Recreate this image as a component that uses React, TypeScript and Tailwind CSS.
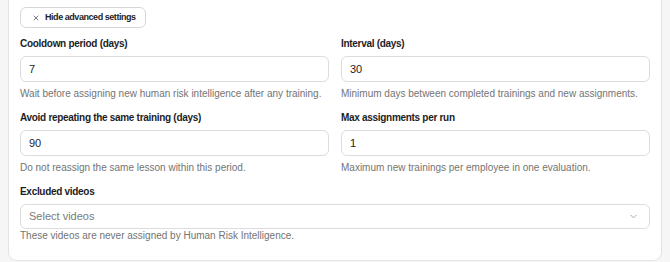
import { X, ChevronDown } from "lucide-react";

function Field({ label, value, help }: { label: string; value: string; help: string }) {
  return (
    <div className="flex flex-col">
      <label className="text-[10px] font-bold tracking-[-0.3px] text-[#1d1d1f] leading-[14px] mb-[5px]">{label}</label>
      <div className="h-[26px] rounded-[6px] border border-[#dcdcdc] bg-white px-[8px] flex items-center text-[11px] text-[#1d1d1f]">
        {value}
      </div>
      <p className="mt-[5px] text-[10px] leading-[14px] text-[#747474] whitespace-nowrap">{help}</p>
    </div>
  );
}

export default function App() {
  return (
    <div className="h-[262px] w-[670px] bg-[#f6f6f6] px-[8px]" style={{ fontFamily: "'Liberation Sans', Arial, sans-serif" }}>
      <div className="w-[654px] bg-white border-x border-b border-[#e4e4e4] rounded-b-[9px] px-[11px] pt-[7px] pb-[17px]">
        <button className="h-[21px] pl-[11px] pr-[9px] rounded-[6px] border border-[#d6d6d6] bg-white flex items-center gap-[5px] text-[9px] font-bold tracking-[-0.45px] text-[#1d1d1f]">
          <X size={8} strokeWidth={1.8} />
          Hide advanced settings
        </button>
        <div className="grid grid-cols-2 gap-x-[12px] gap-y-[10px] mt-[9px]">
          <Field label="Cooldown period (days)" value="7" help="Wait before assigning new human risk intelligence after any training." />
          <Field label="Interval (days)" value="30" help="Minimum days between completed trainings and new assignments." />
          <Field label="Avoid repeating the same training (days)" value="90" help="Do not reassign the same lesson within this period." />
          <Field label="Max assignments per run" value="1" help="Maximum new trainings per employee in one evaluation." />
        </div>
        <div className="mt-[10px] flex flex-col">
          <label className="text-[10px] font-bold tracking-[-0.3px] text-[#1d1d1f] leading-[14px] mb-[5px]">Excluded videos</label>
          <div className="h-[25px] rounded-[6px] border border-[#dcdcdc] bg-white pl-[8px] pr-[10px] flex items-center justify-between text-[11px] text-[#7a7a7a]">
            <span>Select videos</span>
            <ChevronDown size={11} strokeWidth={1.6} className="text-[#8a8a8a]" />
          </div>
          <p className="mt-0 text-[10px] leading-[14px] text-[#747474]">These videos are never assigned by Human Risk Intelligence.</p>
        </div>
      </div>
    </div>
  );
}
